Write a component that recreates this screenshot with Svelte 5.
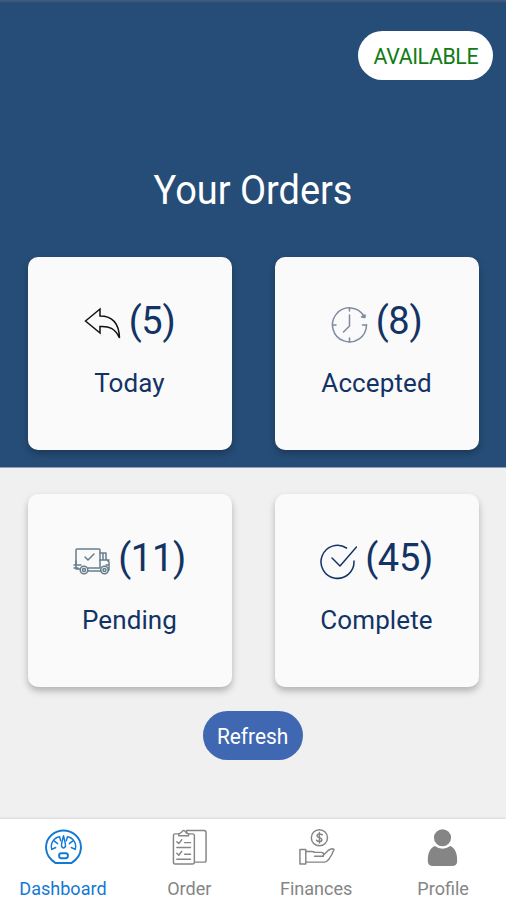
<script>
  let available = true;
  let active = "dashboard";

  const orders = [
    { id: "today", label: "Today", count: 5 },
    { id: "accepted", label: "Accepted", count: 8 },
    { id: "pending", label: "Pending", count: 11 },
    { id: "complete", label: "Complete", count: 45 },
  ];

  const tabs = [
    { id: "dashboard", label: "Dashboard" },
    { id: "order", label: "Order" },
    { id: "finances", label: "Finances" },
    { id: "profile", label: "Profile" },
  ];
</script>

<style>
  :global(body) {
    background: #f0f0f0;
  }
  .screen {
    box-sizing: border-box;
    width: 506px;
    height: 900px;
    display: flex;
    flex-direction: column;
    overflow: hidden;
    font-family: Roboto, "Liberation Sans", sans-serif;
    background: linear-gradient(#4a5e80 0, #264d77 3px, #264d77 467px, #f0f0f0 468px);
  }
  button {
    border: 0;
    padding: 0;
    font-family: inherit;
    cursor: pointer;
  }
  header {
    display: flex;
    justify-content: flex-end;
    padding: 31px 13px 0 0;
  }
  .status {
    width: 135px;
    height: 49px;
    border-radius: 25px;
    background: #fff;
    color: #117c17;
    font-size: 22px;
    letter-spacing: -0.4px;
    line-height: 51px;
  }
  .status span,
  .refresh span,
  .tab span {
    display: inline-block;
    transform: scaleX(0.95);
  }
  .status span {
    transform: scaleX(0.97);
  }
  h1 {
    margin: 87px 0 0;
    height: 90px;
    color: #fff;
    font-size: 40px;
    font-weight: 400;
    line-height: 48px;
    text-align: center;
    transform: scaleX(0.948);
  }
  .grid {
    display: grid;
    grid-template-columns: 204px 204px;
    grid-auto-rows: 193px;
    justify-content: center;
    gap: 44px 43px;
  }
  .card {
    box-sizing: border-box;
    padding-top: 40px;
    border-radius: 10px;
    background: #fafafa;
    box-shadow: 0 4px 7px rgba(0, 0, 0, 0.26);
    color: #133365;
    text-align: center;
  }
  .count {
    display: flex;
    justify-content: center;
    align-items: center;
    height: 48px;
    gap: 8px;
    font-size: 38px;
    letter-spacing: -0.3px;
  }
  .count svg {
    width: 37px;
    height: 38px;
    margin-top: 6px;
    flex: none;
  }
  .label {
    margin-top: 22px;
    font-size: 26px;
    line-height: 32px;
    letter-spacing: 0.1px;
  }
  svg {
    fill: none;
    stroke: currentColor;
    stroke-width: 1.5;
    stroke-linecap: round;
    stroke-linejoin: round;
  }
  .today svg {
    color: #111;
  }
  .accepted svg {
    color: #7e8ba3;
  }
  .pending svg {
    color: #657d8c;
  }
  .refresh {
    align-self: center;
    width: 100px;
    height: 49px;
    margin-top: 24px;
    border-radius: 25px;
    background: #4067b2;
    color: #fff;
    font-size: 22px;
    line-height: 51px;
  }
  nav {
    display: grid;
    grid-template-columns: repeat(4, 1fr);
    height: 81px;
    margin-top: auto;
    background: #fff;
    box-shadow: 0 -1px 2px rgba(0, 0, 0, 0.1);
  }
  .tab {
    display: flex;
    flex-direction: column;
    align-items: center;
    padding-top: 9px;
    background: none;
    color: #858585;
    font-size: 19px;
    line-height: 24px;
  }
  .tab svg {
    width: 37px;
    height: 39px;
    margin-bottom: 10px;
  }
  .tab.active {
    color: #1479d4;
  }
</style>

<div class="screen">
  <header>
    <button class="status" on:click={() => (available = !available)}>
      <span>{available ? "AVAILABLE" : "OFFLINE"}</span>
    </button>
  </header>
  <h1>Your Orders</h1>

  <div class="grid">
    {#each orders as order}
      <div class="card {order.id}">
        <div class="count">
          <svg viewBox="0 0 37 38">
            {#if order.id === "today"}
              <path
                d="M1.5 16 L16 4 V11 C27 11 35 17 35.5 33 C31 23 25 21 16 21.5 V28 Z"
                stroke-linejoin="miter" />
            {:else if order.id === "accepted"}
              <path d="M33 11 A17 17 0 1 0 35.5 20" />
              <path d="M35.5 20 L31.5 20 M18.5 3 V6 M1.5 20 H5 M18.5 37 V33 M18.5 10 V21 L12.5 27" />
              <path d="M30.5 12 L34 12.5 L34 10 Z" />
            {:else if order.id === "pending"}
              <path d="M3 22 V8 Q3 7 4 7 H26 Q27 7 27 8 V26 H15" />
              <path d="M3 19 V27 H7 M1 23 H8 M1 26 H5 M15 29 H28 M27 11 H33 V17 L36 20 V28 H35 M27 18 H36 M30 12 V17 M33 23 H36" />
              <path d="M12 15 L15 18 L21 12" />
              <circle cx="11" cy="28" r="3.8" />
              <circle cx="11" cy="28" r="1.5" />
              <circle cx="31.5" cy="28" r="3.8" />
              <circle cx="31.5" cy="28" r="1.5" />
            {:else}
              <path d="M26.5 6 A16.5 16.5 0 1 0 34 19" />
              <path d="M12 16 L20 24 L36.5 5" />
            {/if}
          </svg>
          <span>({order.count})</span>
        </div>
        <div class="label">{order.label}</div>
      </div>
    {/each}
  </div>

  <button class="refresh"><span>Refresh</span></button>

  <nav>
    {#each tabs as tab}
      <button
        class="tab"
        class:active={active === tab.id}
        on:click={() => (active = tab.id)}>
        <svg viewBox="0 0 38 40">
          {#if tab.id === "dashboard"}
            <path d="M11 36 C-2 28 -1 14 7 7 C14 1 24 1 31 7 C39 14 40 28 27 36 Z" stroke-width="2" />
            <path d="M7 22 C5 16 9 10 15 9 M31 22 C33 16 29 10 23 9 M7 22 L11 20 M31 22 L27 20 M9 13 L13 16 M29 13 L25 16 M15 9 L16 13 M23 9 L22 13" />
            <path d="M19 8 C18 12 16.5 17 17 19 Q19 22 21 19 C21.5 17 20 12 19 8 Z" />
            <rect x="14.5" y="26" width="9" height="5" rx="2.2" stroke-width="2" />
          {:else if tab.id === "order"}
            <path d="M16 5 V2.5 H34 Q36 2.5 36 5 V33 Q36 35 34 35 H25" />
            <path d="M8 6 H4 Q2.5 6 2.5 8 V35 Q2.5 37 4 37 H22 Q24 37 24 35 V8 Q24 6 22 6 H18" />
            <path d="M8 8 V6 Q10 5 11 4 Q13 1 15 4 Q16 5 18 6 V8 Z" />
            <path d="M6 14 L8 16 L11 12 M14 15 H20 M6 20 H20 M6 26 L8 28 L11 24 M14 27 H20 M6 32 H20" />
          {:else if tab.id === "finances"}
            <circle cx="22" cy="10" r="8.3" />
            <path d="M25 7 C23 5.5 19.5 6 19.5 8 C19.5 10.5 24.5 9.5 24.5 12 C24.5 14.5 20.5 14.5 19 12.5 M22 4.5 V15.5" />
            <path d="M2 22 H8 V37 H2 Z M8 24 H14 Q16 24 17 25 H24 Q27 25 26 29 H17 M26 28 L31 23 Q35 20 37 22 C35 27 31 35 27 35 H8" />
          {:else}
            <circle cx="19" cy="10" r="8.8" fill="currentColor" stroke="none" />
            <path
              d="M11 18.5 Q19 24 27 18.5 C32 21 34.5 26 34 35 Q33.5 39 29 39 H9 Q4.5 39 4 35 C3.5 26 6 21 11 18.5 Z"
              fill="currentColor"
              stroke="none" />
          {/if}
        </svg>
        <span>{tab.label}</span>
      </button>
    {/each}
  </nav>
</div>
